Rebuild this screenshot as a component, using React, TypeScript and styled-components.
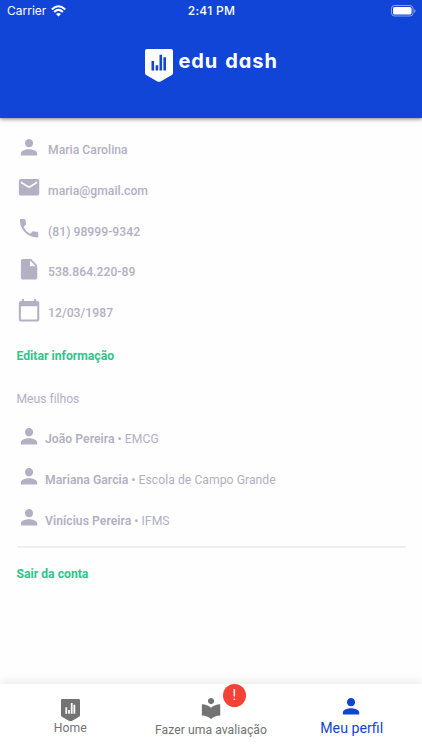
import React from "react";
import styled, { createGlobalStyle } from "styled-components";

const GlobalStyle = createGlobalStyle`
  * { box-sizing: border-box; }
  body { margin: 0; background: #fefefe; font-family: Roboto, sans-serif; }
`;

const Screen = styled.div`
  width: 422px;
  height: 750px;
  display: flex;
  flex-direction: column;
  overflow: hidden;
`;

const Header = styled.header`
  height: 118px;
  flex: none;
  background: #1145d8;
  color: #fff;
  box-shadow: 0 1px 4px rgba(0, 0, 0, 0.5);
`;

const StatusBar = styled.div`
  height: 22px;
  display: grid;
  grid-template-columns: 1fr auto 1fr;
  align-items: center;
  padding: 0 6px 0 7px;
  font-family: Inter, sans-serif;
  font-size: 12px;
  line-height: 22px;
`;

const Carrier = styled.div`
  display: flex;
  align-items: center;
  gap: 5px;
`;

const Clock = styled.div`
  font-weight: 500;
  letter-spacing: 0.3px;
`;

const BatteryIcon = styled.svg`
  justify-self: end;
  margin-bottom: 1px;
`;

const Brand = styled.div`
  display: flex;
  align-items: flex-start;
  padding: 27px 0 0 144.5px;
  gap: 6px;
`;

const Wordmark = styled.span`
  font-family: Inter, sans-serif;
  font-feature-settings: "cv11";
  font-weight: 750;
  font-size: 20px;
  line-height: 25px;
  letter-spacing: 0.9px;
  word-spacing: 1.5px;
`;

const Content = styled.main`
  flex: 1;
  padding: 8.5px 16.5px 0;
  color: #b2b0c2;
  font-size: 12.2px;
`;

const Row = styled.div<{ $gap: number }>`
  height: 40.75px;
  display: flex;
  align-items: flex-start;
  gap: ${(p) => p.$gap}px;
  padding-top: 8px;
  svg { flex: none; }
`;

const RowText = styled.span<{ $spacing: number; $weight?: number }>`
  margin-top: 7.6px;
  line-height: 16px;
  font-weight: ${(p) => p.$weight ?? 500};
  letter-spacing: ${(p) => p.$spacing}px;
  white-space: nowrap;
  b { font-weight: 600; }
`;

const Link = styled.a<{ $top: number }>`
  display: block;
  margin-top: ${(p) => p.$top}px;
  color: #2fc48d;
  font-weight: 700;
  line-height: 16px;
`;

const SectionTitle = styled.div`
  margin: 26.5px 0 9px;
  line-height: 16px;
  letter-spacing: -0.04px;
`;

const Divider = styled.hr`
  margin: 8px 0 0;
  border: 0;
  height: 2px;
  background: #f0f0f2;
`;

const TabBar = styled.nav`
  height: 66px;
  flex: none;
  display: grid;
  grid-template-columns: repeat(3, 1fr);
  background: #fff;
  box-shadow: 0 -2px 10px rgba(0, 0, 0, 0.09);
`;

const Tab = styled.a<{ $active?: boolean; $top: number; $size: number; $spacing?: number; $textTop: number }>`
  position: relative;
  display: flex;
  flex-direction: column;
  align-items: center;
  padding-top: ${(p) => p.$top}px;
  color: ${(p) => (p.$active ? "#1145d0" : "#737373")};
  font-size: ${(p) => p.$size}px;
  letter-spacing: ${(p) => p.$spacing ?? 0}px;
  line-height: 16px;
  white-space: nowrap;
  span { margin-top: ${(p) => p.$textTop}px; }
`;

const Badge = styled.i`
  position: absolute;
  top: 0;
  left: 82.2px;
  width: 23px;
  height: 23px;
  border-radius: 50%;
  background: #f44336;
  color: #fff;
  font-style: normal;
  font-size: 14px;
  line-height: 22px;
  text-align: center;
`;

const paths = {
  person: "M12 12c2.21 0 4-1.79 4-4s-1.79-4-4-4-4 1.79-4 4 1.79 4 4 4zm0 2c-2.67 0-8 1.34-8 4v2h16v-2c0-2.66-5.33-4-8-4z",
  mail: "M20 4H4c-1.1 0-1.99.9-1.99 2L2 18c0 1.1.9 2 2 2h16c1.1 0 2-.9 2-2V6c0-1.1-.9-2-2-2zm0 4l-8 5-8-5V6l8 5 8-5v2z",
  phone: "M6.62 10.79c1.44 2.83 3.76 5.14 6.59 6.59l2.2-2.2c.27-.27.67-.36 1.02-.24 1.12.37 2.33.57 3.57.57.55 0 1 .45 1 1V20c0 .55-.45 1-1 1-9.39 0-17-7.61-17-17 0-.55.45-1 1-1h3.5c.55 0 1 .45 1 1 0 1.25.2 2.45.57 3.57.11.35.03.74-.25 1.02l-2.2 2.2z",
  file: "M6 2c-1.1 0-1.99.9-1.99 2L4 20c0 1.1.89 2 1.99 2H18c1.1 0 2-.9 2-2V8l-6-6H6zm7 7V3.5L18.5 9H13z",
  calendar: "M20 3h-1V1h-2v2H7V1H5v2H4c-1.1 0-2 .9-2 2v16c0 1.1.9 2 2 2h16c1.1 0 2-.9 2-2V5c0-1.1-.9-2-2-2zm0 18H4V8h16v13z",
  reader: "M12 11.55C9.64 9.35 6.48 8 3 8v11c3.48 0 6.64 1.35 9 3.55 2.36-2.19 5.52-3.55 9-3.55V8c-3.48 0-6.64 1.35-9 3.55zM12 8c1.66 0 3-1.34 3-3s-1.34-3-3-3-3 1.34-3 3 1.34 3 3 3z",
};

function Icon({ name, size = 24.5 }: { name: keyof typeof paths; size?: number }) {
  return (
    <svg width={size} height={size} viewBox="0.2 0 24 24" fill="currentColor">
      <path d={paths[name]} />
    </svg>
  );
}

function Shield({ width, height, bars }: { width: number; height: number; bars: string }) {
  return (
    <svg width={width} height={height} viewBox="0 0 28 33" preserveAspectRatio="none">
      <path d="M2 0h24q2 0 2 2v22q0 1.4-1.2 2.1L15.6 32.4q-1.6.9-3.2 0L1.2 26.1Q0 25.4 0 24V2Q0 0 2 0z" fill="currentColor" />
      <path d="M6.5 12h2.6v9.5H6.5zM10.6 16.2h2.6v5.3h-2.6zM14.5 5.7h2.6v15.8h-2.6zM18.4 8.3H21v13.2h-2.6z" fill={bars} />
    </svg>
  );
}

const details: { icon: keyof typeof paths; text: string }[] = [
  { icon: "person", text: "Maria Carolina" },
  { icon: "mail", text: "maria@gmail.com" },
  { icon: "phone", text: "(81) 98999-9342" },
  { icon: "file", text: "538.864.220-89" },
  { icon: "calendar", text: "12/03/1987" },
];

const children = [
  { name: "João Pereira", school: "EMCG" },
  { name: "Mariana Garcia", school: "Escola de Campo Grande" },
  { name: "Vinícius Pereira", school: "IFMS" },
];

export default function App() {
  return (
    <Screen>
      <GlobalStyle />
      <Header>
        <StatusBar>
          <Carrier>
            Carrier
            <svg width="15" height="12" viewBox="0 0 15 12" fill="none" stroke="#fff" strokeWidth="2">
              <path d="M.8 4.4Q7.5-1.9 14.2 4.4M3.1 6.9Q7.5 2.9 11.9 6.9" />
              <path d="M5 8.9Q7.5 6.9 10 8.9L7.5 11.5z" fill="#fff" stroke="none" />
            </svg>
          </Carrier>
          <Clock>2:41 PM</Clock>
          <BatteryIcon width="25" height="12" viewBox="0 0 25 12">
            <rect x=".5" y=".5" width="21.5" height="10.5" rx="3" fill="none" stroke="#fff" strokeOpacity=".5" />
            <rect x="2" y="2" width="18.5" height="7.5" rx="1.6" fill="#fff" />
            <path d="M23.2 4v3.8q1.3-.5 1.3-1.9T23.2 4z" fill="#fff" opacity=".5" />
          </BatteryIcon>
        </StatusBar>
        <Brand>
          <Shield width={28} height={33} bars="#1145d8" />
          <Wordmark>edu dash</Wordmark>
        </Brand>
      </Header>
      <Content>
        {details.map((d) => (
          <Row key={d.icon} $gap={7}>
            <Icon name={d.icon} />
            <RowText $spacing={0.02}>{d.text}</RowText>
          </Row>
        ))}
        <Link $top={17.8}>Editar informação</Link>
        <SectionTitle>Meus filhos</SectionTitle>
        {children.map((c) => (
          <Row key={c.name} $gap={4}>
            <Icon name="person" />
            <RowText $spacing={0.03} $weight={400}>
              <b>{c.name}</b> • {c.school}
            </RowText>
          </Row>
        ))}
        <Divider />
        <Link $top={18}>Sair da conta</Link>
      </Content>
      <TabBar>
        <Tab $top={14.5} $size={12.2} $spacing={0.05} $textTop={-1}>
          <Shield width={19} height={22.5} bars="#fff" />
          <span>Home</span>
        </Tab>
        <Tab $top={12} $size={12.2} $spacing={0.04} $textTop={1}>
          <Icon name="reader" />
          <span>Fazer uma avaliação</span>
          <Badge>!</Badge>
        </Tab>
        <Tab $active $top={9.5} $size={14.2} $textTop={2}>
          <Icon name="person" />
          <span>Meu perfil</span>
        </Tab>
      </TabBar>
    </Screen>
  );
}
